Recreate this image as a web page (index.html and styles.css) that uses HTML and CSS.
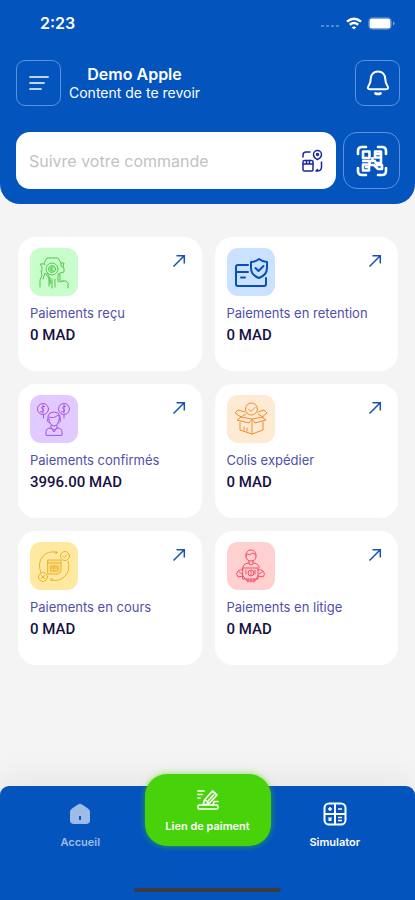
FILE: index.html
```html
<!DOCTYPE html>
<html lang="fr">
<head>
<meta charset="utf-8">
<meta name="viewport" content="width=device-width, initial-scale=1">
<title>Accueil</title>
<link rel="stylesheet" href="styles.css">
</head>
<body>
<header class="header">
  <div class="status">
    <span class="time">2:23</span>
    <div class="signals">
      <svg width="20" height="10" viewBox="0 0 20 10" fill="#fff" opacity=".3"><rect x="1" y="7" width="3" height="2"/><rect x="6" y="7" width="3" height="2"/><rect x="11" y="7" width="3" height="2"/><rect x="16" y="7" width="3" height="2"/></svg>
      <svg width="16" height="13" viewBox="0 0 16 13" fill="none" stroke="#fff" stroke-width="2.4"><path d="M1 4.6Q8-1.2 15 4.6M3.8 7.8Q8 4.4 12.2 7.8"/><path d="M8 12.5L5.7 10.2Q8 8.6 10.3 10.2Z" fill="#fff" stroke="none"/></svg>
      <svg width="27" height="13" viewBox="0 0 27 13"><rect x=".5" y=".5" width="23" height="12" rx="4" fill="none" stroke="#fff" opacity=".25"/><rect x="1.500" y="1.500" width="21" height="10" rx="2.500" fill="#fff"/><path d="M25 4.500v4q1.500-.5 1.500-2t-1.500-2z" fill="#fff" opacity=".5"/></svg>
    </div>
  </div>
  <div class="top">
    <button class="square" type="button" aria-label="Menu">
      <svg width="22" height="18" viewBox="0 0 22 18" fill="none" stroke="#fff" stroke-width="1.700" stroke-linecap="round"><path d="M2 3h18M2 9h14M2 15h11"/></svg>
    </button>
    <div class="welcome">
      <h1>Demo Apple</h1>
      <p>Content de te revoir</p>
    </div>
    <button class="square bell" type="button" aria-label="Notifications">
      <svg width="26" height="28" viewBox="0 0 26 28" fill="none" stroke="#fff" stroke-width="2" stroke-linecap="round" stroke-linejoin="round"><path d="M13 2.500C8.500 2.500 5.700 5.800 5.700 10c0 4-.7 5-2.200 7-1.300 2-.6 3.200 1.500 3.200h16c2.100 0 2.800-1.200 1.500-3.200-1.500-2-2.200-3-2.200-7C20.300 5.800 17.500 2.500 13 2.500z"/><path d="M10.500 24.500q2.500 1 5 0" stroke-width="2.700"/></svg>
    </button>
  </div>
  <form class="search">
    <label class="field">
      <input type="search" aria-label="Suivre votre commande" placeholder="Suivre votre commande">
      <svg width="22" height="24" viewBox="0 0 22 24" fill="none" stroke="#1729a0" stroke-width="1.500" stroke-linecap="round" stroke-linejoin="round"><path d="M2 8V6q0-3 3-3h4"/><path d="M16.500 10.500q-4-2-4-5a4 4 0 0 1 8 0q0 3-4 5z"/><circle cx="16.500" cy="5.500" r="1"/><rect x="2" y="11.500" width="10" height="10.500" rx="1.500"/><path d="M2 15h10M5.500 11.500V15M8.500 11.500V15"/><path d="M20.500 13v5q0 3.500-3.500 4h-2l1.500-1.500"/></svg>
    </label>
    <button class="scan" type="button" aria-label="Scanner un code">
      <svg width="32" height="32" viewBox="0 0 32 32" fill="none" stroke="#fff" stroke-width="2.600" stroke-linejoin="round"><path d="M2 9V6q0-4 4-4h4M22 2h4q4 0 4 4v3M30 23v3q0 4-4 4h-4M10 30H6q-4 0-4-4v-3" stroke-linecap="round"/><rect x="7" y="6.500" width="6.500" height="6.500"/><rect x="19" y="6.500" width="6" height="6"/><rect x="7" y="19.500" width="6" height="6"/><path d="M16.500 12v4h-3v4h6M6 16h7M25 13v5h-5l-2-3M18 20l4 4h4v-4h-6M20 9h4M9 22h3"/></svg>
    </button>
  </form>
</header>

<main class="grid">
  <a class="card" href="#recu">
    <span class="tile green"><svg viewBox="0 0 48 48"><path d="M10 39v-7l2-5-1-4M13 31l2-6 4 5 2 5M15 17l-1-2 3-5h11l3 5v3l3 2v4l-4 1M14 16h-4l2 3v4M31 15h3l-1 4M20 36v-6l-3-5M19 30v8M22 31v9M25 31v8M28 34V26q2-2 2 2v6l3-1M32 33h4l2 2v5"/><circle cx="22" cy="21" r="6"/><circle cx="22" cy="21" r="3.500"/><path d="M24 19h-3v4h3M20 21h3"/></svg></span>
    <svg class="arrow" viewBox="0 0 14 14"><path d="M1.500 12.500L12 2M4.500 1.700H12.300V9.500"/></svg>
    <span class="label">Paiements reçu</span>
    <strong class="value">0 MAD</strong>
  </a>
  <a class="card" href="#retention">
    <span class="tile blue"><svg viewBox="0 0 48 48"><path d="M21 17H11q-2 0-2 2v17q0 2 2 2h26q2 0 2-2v-6M9 24h12M14 29.500h4"/><path d="M32 11q4 3 8 3v6q0 7-8 10-8-3-8-10v-6q4 0 8-3z"/><path d="M28.500 20l3 3 5-5"/></svg></span>
    <svg class="arrow" viewBox="0 0 14 14"><path d="M1.500 12.500L12 2M4.500 1.700H12.300V9.500"/></svg>
    <span class="label">Paiements en retention</span>
    <strong class="value">0 MAD</strong>
  </a>
  <a class="card" href="#confirmes">
    <span class="tile purple"><svg viewBox="0 0 48 48"><circle cx="13" cy="14" r="5.500"/><circle cx="34" cy="14" r="5.500"/><path d="M14.500 11.500h-2q-2 1.200 0 2.500t0 2.800h-2M13 10v8M35.500 11.500h-2q-2 1.200 0 2.500t0 2.800h-2M34 10v8M13.500 20v3M34 20v3M18 25v-4q1-4 6-4t6 4v4M19 22q5 2 9-2l2 3M19 24q0 6 5 7 5-1 5-7M18 24q-2 3 2 4M30 24q2 3-2 4M21 30v3l3 2 3-2v-3M16 40v-3q0-4 5-4l3 4 3-4q5 0 5 4v3z"/></svg></span>
    <svg class="arrow" viewBox="0 0 14 14"><path d="M1.500 12.500L12 2M4.500 1.700H12.300V9.500"/></svg>
    <span class="label">Paiements confirmés</span>
    <strong class="value">3996.00 MAD</strong>
  </a>
  <a class="card" href="#colis">
    <span class="tile orange"><svg viewBox="0 0 48 48"><circle cx="24.500" cy="14" r="6"/><path d="M21.500 14l2.500 2.500 4-4M18 17l-7-2-3 3 6 4-4 3 12 3 3-4 3 4 11-3-4-3 5-4-3-3-6 2M14 22l11 2 11-2M14 22l5-3M36 22l-5-3M13 27v8l12 4 11-4v-8M25 26v13M17 35v-3M20 36v-3"/></svg></span>
    <svg class="arrow" viewBox="0 0 14 14"><path d="M1.500 12.500L12 2M4.500 1.700H12.300V9.500"/></svg>
    <span class="label">Colis expédier</span>
    <strong class="value">0 MAD</strong>
  </a>
  <a class="card" href="#cours">
    <span class="tile yellow"><svg viewBox="0 0 48 48"><path d="M11 31Q7 21 13 14q5-5 12-4M38 19q3 10-4 16-6 5-12 3"/><circle cx="26" cy="10.500" r="1"/><circle cx="21.500" cy="37.500" r="1"/><circle cx="35" cy="14" r="4.500"/><path d="M33 14l1.500 1.500 2.500-3"/><circle cx="13" cy="35" r="4.500"/><path d="M11 33l4 4M15 33l-4 4"/><path d="M18 18h13v12l-3 2H18zM18 21h13M21 24h7v5h-7zM21 26h7M24 24v5" fill="#f2bf38" fill-opacity=".25"/></svg></span>
    <svg class="arrow" viewBox="0 0 14 14"><path d="M1.500 12.500L12 2M4.500 1.700H12.300V9.500"/></svg>
    <span class="label">Paiements en cours</span>
    <strong class="value">0 MAD</strong>
  </a>
  <a class="card" href="#litige">
    <span class="tile red"><svg viewBox="0 0 48 48"><path d="M19 14q0-6 5-6t5 6q0 5-5 5t-5-5zM19 12q4 2 7-1l3 2M22 19v3l2 1 2-1v-3M16 26v-1q1-4 6-4M32 26v-1q-1-4-6-4M16 26h15v11H16zM16 28q-3-1-5 1-3 3 0 6l5-1M31 28q3-1 5 1 3 3 0 6l-5-1M16 34l4 5h8l3-5M21 37v3M24 37v3M27 37v3M12 30l3 2M35 30l-3 2"/><circle cx="24" cy="31" r="3"/><path d="M24 29v4M19 28v4M28 28v4"/></svg></span>
    <svg class="arrow" viewBox="0 0 14 14"><path d="M1.500 12.500L12 2M4.500 1.700H12.300V9.500"/></svg>
    <span class="label">Paiements en litige</span>
    <strong class="value">0 MAD</strong>
  </a>
</main>

<footer class="bottom">
  <nav class="nav">
    <a class="tab muted" href="#accueil">
      <svg width="24" height="24" viewBox="0 0 24 24"><path d="M10 2.500q2-1.300 4 0l6 4q2 1.300 2 3.500v8q0 4-4 4H6q-4 0-4-4v-8q0-2.200 2-3.500z" fill="#9fbce8"/><path d="M12 14v4" stroke="#0454bd" stroke-width="2"/></svg>
      <span>Accueil</span>
    </a>
    <a class="tab pay" href="#lien">
      <svg width="24" height="24" viewBox="0 0 24 24" fill="none" stroke="#fff" stroke-width="1.700" stroke-linejoin="round" stroke-linecap="round"><rect x="2" y="17" width="20" height="4" rx="1.500"/><path d="M7 17l1.500-5 8-9 4.500 4-8 8.500-6 1.500M9.500 12l3.500 3.500M12.500 12.500l5-5.500M17 17l1-3.500h4M2 3h6M2 6.500h4M2 10h2"/></svg>
      <span>Lien de paiment</span>
    </a>
    <a class="tab" href="#simulator">
      <svg width="24" height="24" viewBox="0 0 24 24" fill="none" stroke="#fff" stroke-width="2"><rect x="1.500" y="1.500" width="21" height="21" rx="4.500"/><path d="M12 2v20M2 12h20"/><path d="M7 5v4M5 7h4M15 7h4M5.500 15.500l3 3M8.500 15.500l-3 3M15 15.500h4M15 18.500h4" stroke-width="1.500"/></svg>
      <span>Simulator</span>
    </a>
  </nav>
  <div class="indicator"></div>
</footer>
</body>
</html>
```
FILE: styles.css
```css
* { box-sizing: border-box; }

body {
  margin: 0;
  min-height: 100vh;
  display: flex;
  flex-direction: column;
  background: #f4f4f4;
  font-family: Inter, "Liberation Sans", sans-serif;
}

a { color: inherit; text-decoration: none; }
svg { display: block; flex: none; }

.header {
  padding: 0 15px 15px 16px;
  background: #0454bd;
  border-radius: 0 0 20px 20px;
  color: #fff;
}

.status {
  height: 60px;
  padding: 13px 5px 0 24px;
  display: flex;
  justify-content: space-between;
  align-items: flex-start;
}

.time { font-size: 16px; line-height: 20px; font-weight: 600; }

.signals { display: flex; align-items: center; gap: 6px; height: 20px; }

.top { display: flex; align-items: center; gap: 8px; height: 46px; }

.square, .scan {
  display: grid;
  place-items: center;
  flex: none;
  padding: 0;
  background: none;
  border: 1px solid #5b92dc;
}

.square { width: 45px; height: 46px; border-radius: 9px; }
.bell { margin-left: auto; }

.welcome { text-align: center; }
.welcome h1 { margin: 0; font-size: 16px; line-height: 20px; font-weight: 600; }
.welcome p { margin: 0; font-size: 14px; line-height: 18px; }

.search { display: flex; gap: 7px; margin-top: 26px; }

.field {
  flex: 1;
  min-width: 0;
  height: 57px;
  padding: 0 13px;
  display: flex;
  align-items: center;
  background: #fff;
  border-radius: 14px;
}

.field input {
  flex: 1;
  min-width: 0;
  padding: 0;
  border: 0;
  outline: 0;
  background: none;
  font: 16px/20px Inter, "Liberation Sans", sans-serif;
}

.field input::placeholder { color: #c4c1c4; opacity: 1; }

.scan { width: 57px; height: 57px; border-radius: 14px; }

.grid {
  flex: 1;
  display: grid;
  grid-template-columns: 1fr 1fr;
  align-content: start;
  gap: 13px;
  padding: 33px 17px 24px 18px;
}

.card {
  display: grid;
  grid-template-columns: 1fr auto;
  align-content: start;
  min-height: 134px;
  padding: 11px 16px 11px 12px;
  background: #fff;
  border-radius: 18px;
}

.tile { width: 48px; height: 48px; border-radius: 11px; display: grid; place-items: center; }
.tile svg { width: 48px; height: 48px; fill: none; stroke: currentColor; stroke-width: 1; stroke-linejoin: round; stroke-linecap: round; }
.green { background: #cafdcc; color: #51c94a; }
.blue { background: #cae2ff; color: #0750b7; }
.blue svg { stroke-width: 2; }
.purple { background: #e0caff; color: #a554e8; }
.orange { background: #ffead3; color: #f28c2b; }
.yellow { background: #ffe9a1; color: #ebb32b; }
.red { background: #ffd0d0; color: #f34c6b; }

.arrow { width: 14px; height: 14px; margin-top: 6px; fill: none; stroke: #1554b5; stroke-width: 1.500; }

.label, .value { grid-column: 1 / -1; }
.label { margin-top: 8px; font-size: 13px; line-height: 18px; color: #514fa8; }
.value { margin-top: 3px; font: 500 15px/20px Roboto, "Liberation Sans", sans-serif; color: #17113f; }

.bottom {
  background: #0454bd;
  border-radius: 9px 9px 0 0;
  box-shadow: 0 -8px 36px rgba(0, 0, 0, .06);
  color: #fff;
}

.nav {
  display: grid;
  grid-template-columns: 1fr 126px 1fr;
  align-items: start;
  height: 102px;
}

.tab {
  display: flex;
  flex-direction: column;
  align-items: center;
  gap: 9px;
  padding-top: 16px;
  font-size: 11px;
  line-height: 14px;
  font-weight: 600;
}

.nav .muted { color: #9fbce8; padding-left: 16px; }
.tab:last-child { padding-right: 16px; }

.pay {
  height: 72px;
  margin-top: -12px;
  padding-top: 14px;
  gap: 7px;
  background: #48d209;
  border-radius: 22px;
  box-shadow: 0 0 6px rgba(72, 210, 9, .6);
}

.indicator {
  width: 147px;
  height: 4px;
  margin: 0 auto 8px;
  border-radius: 2px;
  background: #3f3a40;
}
```
